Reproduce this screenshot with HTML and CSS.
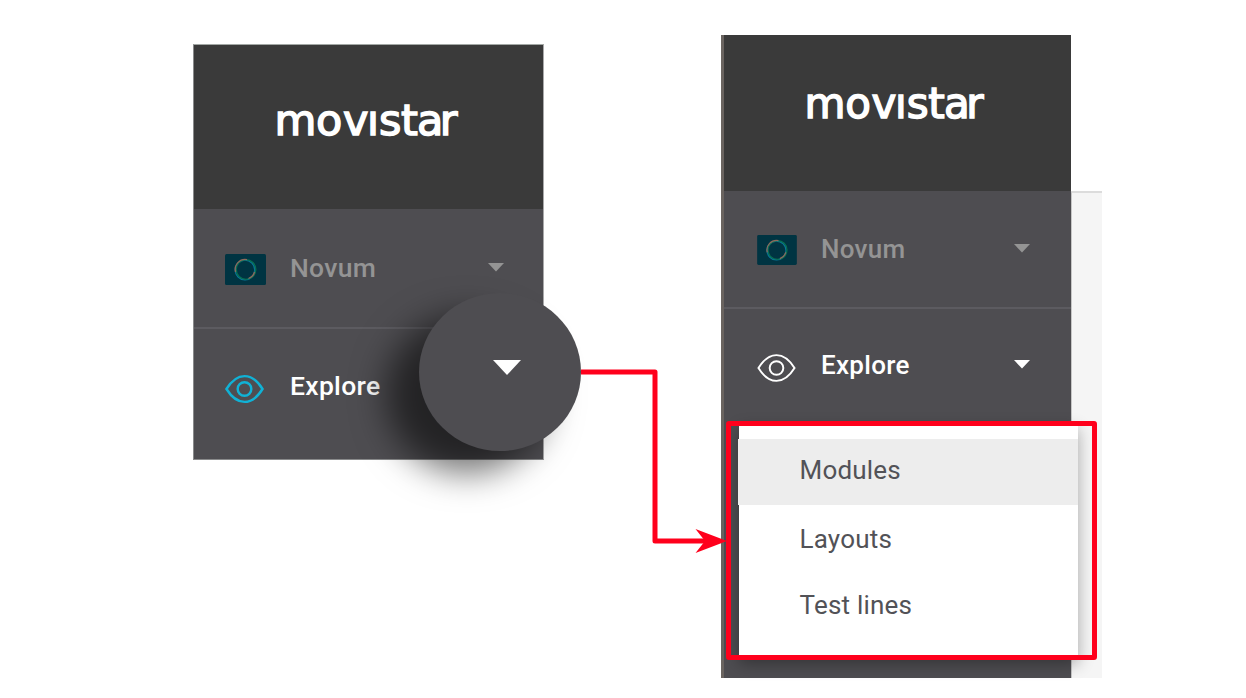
FILE: index.html
```html
<!DOCTYPE html>
<html lang="en">
<head>
<meta charset="utf-8">
<title>Movistar – Explore menu</title>
<link rel="stylesheet" href="styles.css">
</head>
<body>
<main class="stage">
  <nav class="panel panel-closed">
    <header class="brand">
      <svg class="logo" width="184" height="44" viewBox="0 0 184 44"><text class="logo-text" x="-2.500 39 66 90 102 124 140 162.800" y="34.700">movıstar</text></svg>
    </header>
    <div class="row row-muted">
      <svg class="thumb" viewBox="0 0 41 31"><rect width="41" height="31" rx="1.500" fill="#003442"/><g fill="none" stroke-width="1.300"><circle cx="20" cy="16" r="9.800" stroke="#08759a"/><circle cx="21" cy="15.500" r="9.800" stroke="#087052"/><path d="M22 5.700A9.900 9.900 0 0 0 10.500 18M29.500 18a9.700 9.700 0 0 1-6 6.500" stroke="#8d6a5c"/></g></svg>
      <span class="label">Novum</span>
      <svg class="caret" viewBox="0 0 16 9"><path d="M0 0h16l-8 8.500z"/></svg>
    </div>
    <div class="row row-active">
      <svg class="eye eye-blue" viewBox="0 0 40 30"><path d="M1.500 15C7 6.200 13 1.800 20 1.800S33 6.200 38.500 15C33 23.800 27 28.200 20 28.200S7 23.800 1.500 15z"/><circle cx="20" cy="15" r="7"/></svg>
      <span class="label">Explore</span>
    </div>
    <div class="lens"><svg class="lens-caret" viewBox="0 0 28 15"><path d="M0 0h28l-14 15z"/></svg></div>
  </nav>

  <section class="screen">
    <nav class="panel panel-open">
      <header class="brand">
        <svg class="logo" width="180" height="44" viewBox="0 0 184 44"><text class="logo-text" x="-2.500 39 66 90 102 124 140 162.800" y="36.200">movıstar</text></svg>
      </header>
      <div class="row row-muted">
        <svg class="thumb" viewBox="0 0 41 31"><rect width="41" height="31" rx="1.500" fill="#003442"/><g fill="none" stroke-width="1.300"><circle cx="20" cy="16" r="9.800" stroke="#08759a"/><circle cx="21" cy="15.500" r="9.800" stroke="#087052"/><path d="M22 5.700A9.900 9.900 0 0 0 10.500 18M29.500 18a9.700 9.700 0 0 1-6 6.500" stroke="#8d6a5c"/></g></svg>
        <span class="label">Novum</span>
        <svg class="caret" viewBox="0 0 16 9"><path d="M0 0h16l-8 8.500z"/></svg>
      </div>
      <div class="row row-active">
        <svg class="eye" viewBox="0 0 40 30"><path d="M1.500 15C7 6.200 13 1.800 20 1.800S33 6.200 38.500 15C33 23.800 27 28.200 20 28.200S7 23.800 1.500 15z"/><circle cx="20" cy="15" r="7"/></svg>
        <span class="label">Explore</span>
        <svg class="caret" viewBox="0 0 16 9"><path d="M0 0h16l-8 8.500z"/></svg>
      </div>
    </nav>
    <div class="page-edge"></div>
    <ul class="menu">
      <li class="menu-item menu-item-current">Modules</li>
      <li class="menu-item">Layouts</li>
      <li class="menu-item">Test lines</li>
    </ul>
    <div class="highlight"></div>
  </section>

  <svg class="connector" width="148" height="190" viewBox="0 0 148 190"><path class="wire" d="M1 7H75V176H128"/><path class="arrow" d="M115.500 164L147 176L115.500 188L125 176z"/></svg>
</main>
</body>
</html>
```

FILE: styles.css
```css
* { box-sizing: border-box; }
body { margin: 0; background: #fff; font-family: Roboto, "Liberation Sans", sans-serif; }
.stage {
  position: relative;
  display: flex;
  align-items: flex-start;
  gap: 177px;
  width: 1246px;
  height: 698px;
  padding: 35px 144px 0 193px;
  overflow: hidden;
}
.panel { position: relative; display: flex; flex-direction: column; flex: none; background: #4e4d51; }
.panel-closed { width: 351px; height: 416px; margin-top: 9px; border: 1px solid #898a8b; border-top-color: #a3a8a5; border-right-color: #a9a9aa; }
.panel-open { width: 350px; height: 643px; border-left: 3px solid #6a6460; }
.brand { flex: none; display: flex; background: #3a3a3a; }
.panel-closed .brand { height: 164px; padding: 55px 0 0 83px; }
.panel-open .brand { height: 156px; padding: 47px 0 0 83px; }
.logo { display: block; flex: none; overflow: visible; }
.logo-text { font-family: "DejaVu Sans", sans-serif; font-size: 43px; fill: #fff; stroke: #fff; stroke-width: 1.500; }
.row { flex: none; display: flex; align-items: center; color: #fff; font-size: 26px; font-weight: 500; letter-spacing: .3px; }
.row-muted { color: #949494; border-bottom: 2px solid #5c5b60; }
.panel-closed .row { height: 120px; padding: 0 39px 0 31px; }
.panel-open .row { height: 118px; padding: 0 41px 0 33px; }
.panel-closed .row-active { height: 115px; }
.panel-open .row-active { height: 114px; }
.label { margin-left: 24px; line-height: 32px; }
.panel-closed .label { font-size: 26.500px; }
.panel-closed .row-active .label { margin-bottom: 2px; }
.panel-open .row-active .label { margin-bottom: 3px; }
.thumb { width: 41px; height: 31px; margin-top: 2px; }
.panel-open .thumb { width: 40px; height: 30px; }
.eye { width: 39px; height: 30px; margin-right: 1px; fill: none; stroke: #fff; stroke-width: 2; position: relative; top: 2px; }
.eye-blue { stroke: #10b2d6; stroke-width: 2.500; }
.panel-closed .eye + .label { margin-left: 25px; }
.caret { width: 16px; height: 9px; margin-left: auto; margin-bottom: 2px; fill: currentColor; }
.panel-open .row-active .caret { margin-bottom: 4px; }
.lens {
  position: absolute;
  left: 225px;
  top: 248px;
  width: 162px;
  height: 158px;
  border-radius: 50%;
  background: #4e4d51;
  box-shadow: -33px 22px 34px rgba(0, 0, 0, .55);
}
.lens-caret { display: block; width: 28px; height: 15px; margin: 67px 0 0 74px; fill: #fff; }
.screen { position: relative; display: flex; width: 381px; height: 643px; }
.page-edge { width: 31px; height: 487px; margin-top: 156px; background: #f5f5f5; border-top: 2px solid #dcdcdc; border-left: 1px solid #c6c6c6; }
.menu {
  position: absolute;
  left: 18px;
  top: 388px;
  width: 339px;
  height: 235px;
  margin: 0;
  padding: 16px 0 0;
  list-style: none;
  background: #fff;
  box-shadow: 0 6px 15px rgba(0, 0, 0, .32);
}
.menu-item { height: 66px; padding-left: 60.500px; color: #525257; font-size: 26px; line-height: 69px; letter-spacing: .2px; }
.menu-item-current { margin-left: -1px; padding-left: 61.500px; line-height: 63px; background: #ededed; }
.highlight { position: absolute; left: 5px; top: 386px; width: 371px; height: 239px; border: 5px solid #ff001c; border-radius: 3px; }
.connector { position: absolute; left: 580px; top: 365px; }
.wire { fill: none; stroke: #ff001c; stroke-width: 5; stroke-linejoin: round; }
.arrow { fill: #ff001c; }
```
